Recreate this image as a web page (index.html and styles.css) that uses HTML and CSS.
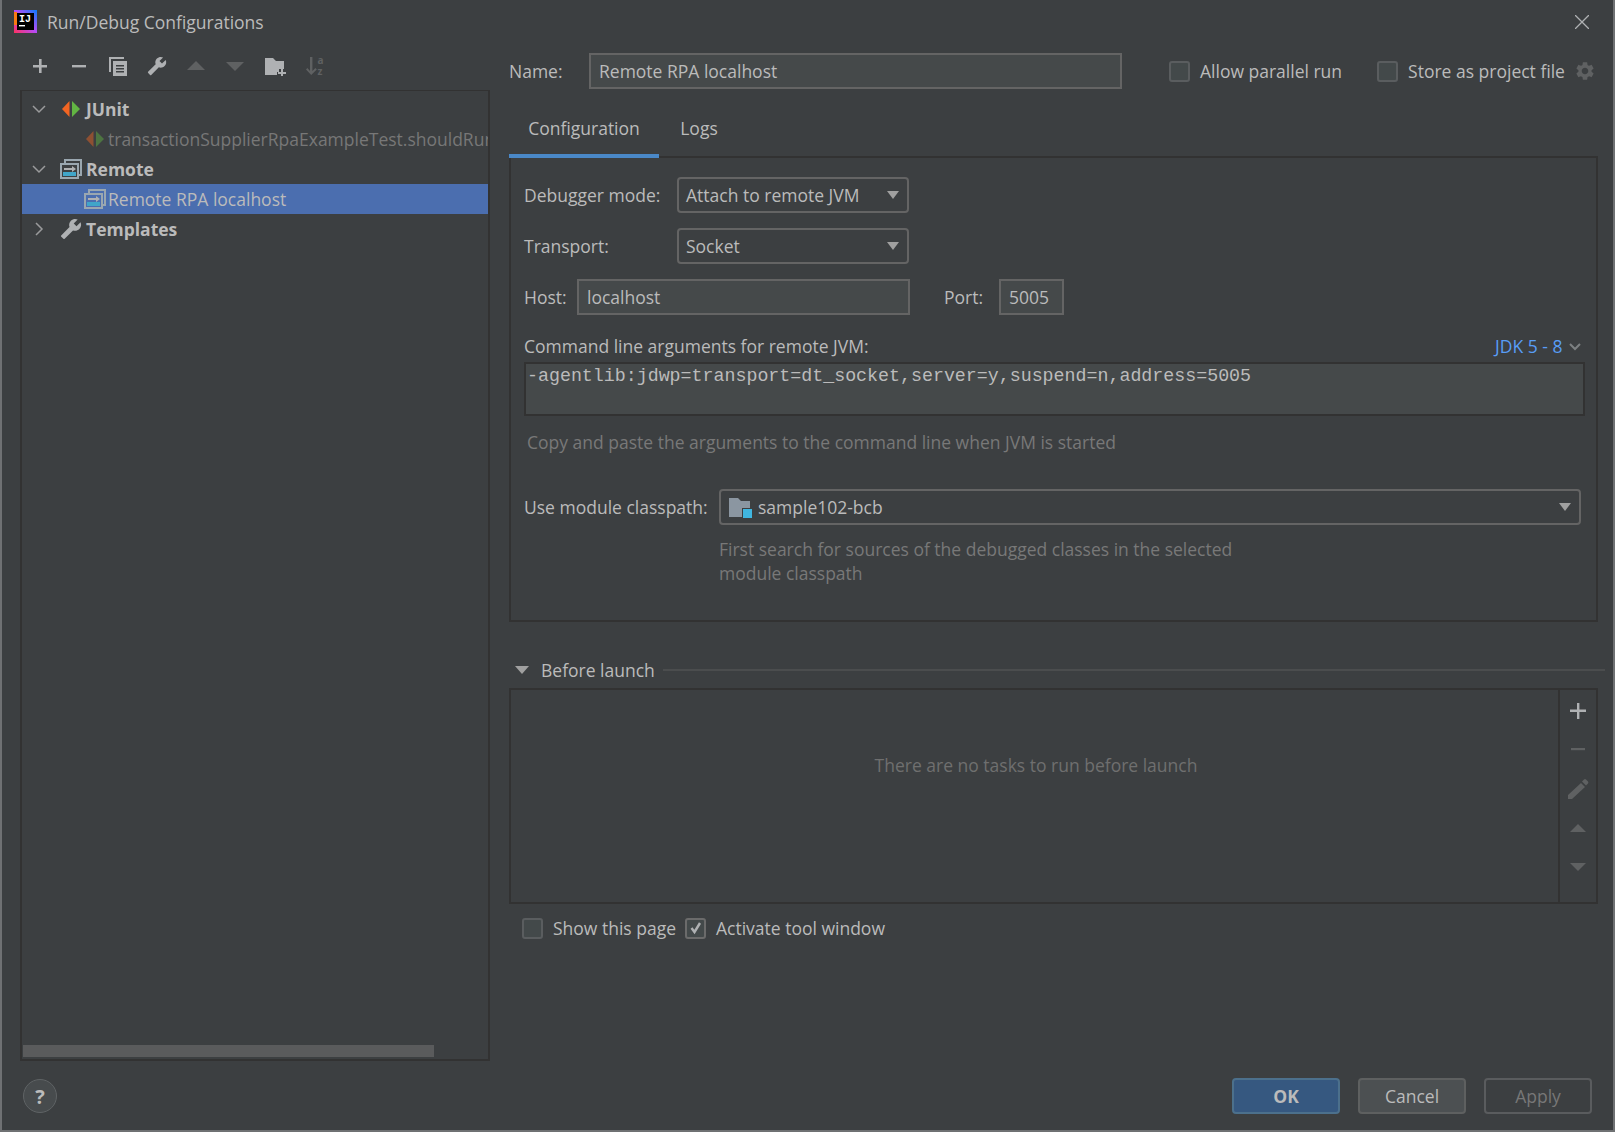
FILE: index.html
```html
<!DOCTYPE html>
<html lang="en">

<head>
    <meta charset="UTF-8">
    <title>Run/Debug Configurations</title>
    <link rel="stylesheet" href="styles.css">
</head>

<body>
    <svg class="defs" width="0" height="0">
        <symbol id="i-junit" viewBox="0 0 20 16">
            <path fill="#f26522" d="M8.5 0v16L1 8z" />
            <path fill="#62b543" d="M11 0v16l8-8z" />
        </symbol>
        <symbol id="i-remote" viewBox="0 0 22 20">
            <path fill="none" stroke="#9aa7b0" stroke-width="2" d="M5 4V1h16v15h-3" />
            <path fill="none" stroke="#9aa7b0" stroke-width="2" d="M1 5h17v14H1z" />
            <path fill="#40a5c9" d="M3 13h13v4H3z" />
            <path fill="#afb1b3" d="M4 9h8V7l4 3-4 3v-2H4z" />
        </symbol>
        <symbol id="i-wrench" viewBox="0 0 24 24">
            <path fill="#afb1b3" transform="matrix(-1 0 0 1 24 0)" d="M22.7 19l-9.1-9.1c.9-2.3.4-5-1.5-6.9-2-2-5-2.4-7.4-1.3L9 6 6 9 1.6 4.7C.4 7.1.9 10.1 2.9 12.1c1.9 1.9 4.6 2.4 6.9 1.5l9.1 9.1c.4.4 1 .4 1.4 0l2.3-2.3c.5-.4.5-1.1.1-1.4z" />
        </symbol>
    </svg>

    <div class="window">
        <div class="titlebar">
            <svg class="logo" width="23" height="23" viewBox="0 0 23 23">
                <defs>
                    <linearGradient id="logo-grad" x1="0" y1="1" x2="1" y2="0">
                        <stop offset="0" stop-color="#fe315d" />
                        <stop offset="0.5" stop-color="#b74af7" />
                        <stop offset="1" stop-color="#087cfa" />
                    </linearGradient>
                </defs>
                <rect width="23" height="23" fill="url(#logo-grad)" />
                <path fill="#f97a12" d="M0 2h3v13H0z" />
                <rect x="3" y="3" width="17" height="17" fill="#000" />
                <text x="5" y="12" class="logo-text">IJ</text>
                <rect x="5" y="15" width="6" height="1.4" fill="#fff" />
            </svg>
            <span class="title">Run/Debug Configurations</span>
            <svg class="close" width="14" height="14" viewBox="0 0 14 14">
                <path fill="none" stroke="#afb1b3" stroke-width="1.3" d="M0 0l14 14M14 0L0 14" />
            </svg>
        </div>

        <div class="main">
            <div class="sidebar">
                <div class="toolbar">
                    <svg class="tool" width="20" height="20" viewBox="0 0 20 20"><path fill="#afb1b3" d="M9 3h2.600v6H17v2.600h-5.400V17H9v-5.400H3V9h6z" /></svg>
                    <svg class="tool" width="20" height="20" viewBox="0 0 20 20"><path fill="#afb1b3" d="M3 9h14v2.400H3z" /></svg>
                    <svg class="tool" width="20" height="20" viewBox="0 0 20 20"><path fill="#afb1b3" d="M1 1h15v2H3v13H1zM5 5h14v15H5zM8 9v1.500h8V9zm0 3v1.500h8V12zm0 3v1.500h8V15z" fill-rule="evenodd" /></svg>
                    <svg class="tool" width="20" height="20"><use href="#i-wrench" /></svg>
                    <svg class="tool" width="20" height="20" viewBox="0 0 20 20"><path fill="#5f6162" d="M10 5l9 9H1z" /></svg>
                    <svg class="tool" width="20" height="20" viewBox="0 0 20 20"><path fill="#5f6162" d="M1 6h18l-9 9z" /></svg>
                    <svg class="tool" width="22" height="20" viewBox="0 0 22 20"><path fill="#afb1b3" d="M1 2h8l3 3h8v8h-5v3h-2v3H1z" /><path fill="#afb1b3" d="M17 13h2v3h3v2h-3v3h-2v-3h-3v-2h3z" /></svg>
                    <svg class="tool" width="20" height="22" viewBox="0 0 20 22">
                        <path fill="#5f6162" d="M5 2h2.400v14l3-3 1.400 1.500L6.200 20 1 14.500 2.400 13l2.600 3z" />
                        <text x="12.500" y="9" class="sort-letter">a</text>
                        <text x="12.500" y="20" class="sort-letter">z</text>
                    </svg>
                </div>
                <div class="tree">
                    <div class="tree-row">
                        <svg class="chev" width="14" height="14" viewBox="0 0 14 14"><path fill="none" stroke="#9a9b9c" stroke-width="1.500" d="M1 4l6 6 6-6" /></svg>
                        <svg class="tree-icon" width="20" height="16"><use href="#i-junit" /></svg>
                        <span class="group">JUnit</span>
                    </div>
                    <div class="tree-row child dim">
                        <svg class="tree-icon dim-icon" width="20" height="16"><use href="#i-junit" /></svg>
                        <span>transactionSupplierRpaExampleTest.shouldRunBatchProcess</span>
                    </div>
                    <div class="tree-row">
                        <svg class="chev" width="14" height="14" viewBox="0 0 14 14"><path fill="none" stroke="#9a9b9c" stroke-width="1.500" d="M1 4l6 6 6-6" /></svg>
                        <svg class="tree-icon" width="22" height="20"><use href="#i-remote" /></svg>
                        <span class="group">Remote</span>
                    </div>
                    <div class="tree-row child selected">
                        <svg class="tree-icon" width="22" height="20"><use href="#i-remote" /></svg>
                        <span>Remote RPA localhost</span>
                    </div>
                    <div class="tree-row">
                        <svg class="chev" width="14" height="14" viewBox="0 0 14 14"><path fill="none" stroke="#9a9b9c" stroke-width="1.500" d="M4 1l6 6-6 6" /></svg>
                        <svg class="tree-icon" width="22" height="22"><use href="#i-wrench" /></svg>
                        <span class="group">Templates</span>
                    </div>
                    <div class="scrollbar">
                        <div class="thumb"></div>
                    </div>
                </div>
            </div>

            <div class="content">
                <div class="name-row">
                    <span class="name-label">Name:</span>
                    <div class="input name-input">Remote RPA localhost</div>
                    <label class="check parallel"><span class="box"></span>Allow parallel run</label>
                    <label class="check store"><span class="box"></span>Store as project file</label>
                    <svg class="gear" width="22" height="22" viewBox="0 0 24 24">
                        <path fill="#5f6162" d="M19.140 12.940c.04-.3.06-.61.06-.94 0-.32-.02-.64-.07-.94l2.030-1.580c.18-.14.23-.41.12-.61l-1.920-3.320c-.12-.22-.37-.29-.59-.22l-2.390.96c-.5-.38-1.030-.7-1.620-.94l-.36-2.540c-.04-.24-.24-.41-.48-.41h-3.840c-.24 0-.43.17-.47.41l-.36 2.540c-.59.24-1.130.57-1.620.94l-2.390-.96c-.22-.08-.47 0-.59.22L2.740 8.870c-.12.21-.08.47.12.61l2.030 1.580c-.05.3-.09.63-.09.94s.02.64.07.94l-2.030 1.580c-.18.14-.23.41-.12.61l1.920 3.320c.12.22.37.29.59.22l2.390-.96c.5.38 1.030.7 1.620.94l.36 2.540c.05.24.24.41.48.41h3.840c.24 0 .44-.17.47-.41l.36-2.540c.59-.24 1.130-.56 1.620-.94l2.390.96c.22.08.47 0 .59-.22l1.920-3.320c.12-.22.07-.47-.12-.61l-2.010-1.580zM12 15.600c-1.980 0-3.600-1.620-3.600-3.600s1.620-3.600 3.600-3.600 3.600 1.620 3.600 3.600-1.620 3.600-3.600 3.600z" />
                    </svg>
                </div>

                <div class="tabs">
                    <div class="tab active">Configuration</div>
                    <div class="tab">Logs</div>
                </div>

                <div class="panel">
                    <div class="form-row">
                        <span class="field-label">Debugger mode:</span>
                        <div class="combo short">Attach to remote JVM<span class="arrow"></span></div>
                    </div>
                    <div class="form-row">
                        <span class="field-label">Transport:</span>
                        <div class="combo short">Socket<span class="arrow"></span></div>
                    </div>
                    <div class="form-row">
                        <span class="host-label">Host:</span>
                        <div class="input host-input">localhost</div>
                        <span class="port-label">Port:</span>
                        <div class="input port-input">5005</div>
                    </div>
                    <div class="args-head">
                        <span>Command line arguments for remote JVM:</span>
                        <span class="jdk">JDK 5 - 8
                            <svg width="12" height="8" viewBox="0 0 12 8"><path fill="none" stroke="#7d8082" stroke-width="2" d="M1 1l5 5 5-5" /></svg>
                        </span>
                    </div>
                    <div class="args">-agentlib:jdwp=transport=dt_socket,server=y,suspend=n,address=5005</div>
                    <div class="hint copy-hint">Copy and paste the arguments to the command line when JVM is started</div>
                    <div class="form-row module-row">
                        <span class="module-label">Use module classpath:</span>
                        <div class="combo wide">
                            <svg class="folder" width="23" height="21" viewBox="0 0 23 21">
                                <path fill="#8b96a1" d="M0 1h9l3 3h9v16H0z" />
                                <path fill="#3d3f41" d="M13 11h10v10H13z" />
                                <path fill="#40b6e0" d="M14 12h9v9h-9z" />
                            </svg>
                            sample102-bcb<span class="arrow"></span>
                        </div>
                    </div>
                    <div class="hint module-hint">First search for sources of the debugged classes in the selected<br>module classpath</div>
                </div>

                <div class="before-head">
                    <span class="fold"></span>
                    <span class="before-title">Before launch</span>
                    <span class="before-line"></span>
                </div>

                <div class="tasks">
                    <div class="tasks-empty">There are no tasks to run before launch</div>
                    <div class="tasks-tools">
                        <svg width="18" height="18" viewBox="0 0 18 18"><path fill="#afb1b3" d="M8 1h2.400v6.600H17V10h-6.600v7H8v-7H1V7.600h7z" /></svg>
                        <svg width="18" height="18" viewBox="0 0 18 18"><path fill="#5f6162" d="M2 8h14v2.200H2z" /></svg>
                        <svg width="22" height="22" viewBox="0 0 22 22"><path fill="#5f6162" d="M1 17L14 5l4 4L5 21H1zM15 3.500l2-2q1-.8 2 0l2 2q.8 1 0 2l-2 2z" /></svg>
                        <svg width="18" height="18" viewBox="0 0 18 18"><path fill="#5f6162" d="M9 4l8 8H1z" /></svg>
                        <svg width="18" height="18" viewBox="0 0 18 18"><path fill="#5f6162" d="M1 5h16l-8 8z" /></svg>
                    </div>
                </div>

                <div class="task-checks">
                    <label class="check"><span class="box"></span>Show this page</label>
                    <label class="check"><span class="box checked">
                        <svg width="14" height="14" viewBox="0 0 14 14"><path fill="none" stroke="#afb1b3" stroke-width="2.400" d="M2.500 7l3 4 5.500-9" /></svg>
                    </span>Activate tool window</label>
                </div>
            </div>
        </div>

        <div class="footer">
            <div class="help">?</div>
            <div class="buttons">
                <button class="btn ok">OK</button>
                <button class="btn">Cancel</button>
                <button class="btn off">Apply</button>
            </div>
        </div>
    </div>
</body>

</html>
```
FILE: styles.css
```css
* {
    margin: 0;
    padding: 0;
    box-sizing: border-box;
}

body {
    width: 1615px;
    height: 1132px;
    overflow: hidden;
    background: #3c3f41;
    color: #bbb;
    font: 17.5px "Open Sans", "Noto Sans", sans-serif;
}

.defs {
    display: block;
    height: 0;
}

.window {
    width: 1615px;
    height: 1132px;
    border-left: 2px solid #6f7173;
    border-right: 2px solid #6f7173;
    border-bottom: 2px solid #6f7173;
    display: flex;
    flex-direction: column;
}

.titlebar {
    height: 48px;
    display: flex;
    align-items: center;
    padding: 0 24px 5px 12px;
}

.logo-text {
    font: bold 10px "Liberation Mono", monospace;
    fill: #fff;
}

.title {
    margin-left: 10px;
}

.close {
    margin-left: auto;
}

.main {
    height: 1013px;
    display: flex;
}

.sidebar {
    width: 488px;
    padding-left: 18px;
    display: flex;
    flex-direction: column;
}

.toolbar {
    height: 42px;
    display: flex;
    align-items: center;
    padding: 0 0 6px 10px;
    gap: 19px;
}

.tree {
    height: 971px;
    width: 470px;
    border: 2px solid #323232;
    border-top-width: 1px;
    padding-top: 3px;
    display: flex;
    flex-direction: column;
    overflow: hidden;
    font-size: 17.5px;
}

.tree-row {
    height: 30px;
    flex: none;
    display: flex;
    align-items: center;
    padding-left: 10px;
    white-space: nowrap;
}

.tree-row .tree-icon {
    flex: none;
    margin-left: 14px;
    margin-right: 3px;
    width: 22px;
}

.tree-row.child {
    padding-left: 40px;
}

.tree-row.child .tree-icon {
    margin-left: 22px;
    margin-right: 2px;
}

.chev {
    flex: none;
}

.group {
    font-weight: 700;
    margin-left: 1px;
}

.dim {
    color: #777;
}

.dim-icon {
    opacity: 0.45;
}

.selected {
    background: #4b6eaf;
}

.scrollbar {
    margin-top: auto;
    height: 14px;
    padding: 0 0 0 1px;
    flex: none;
}

.thumb {
    width: 411px;
    height: 12px;
    background: #5a5b5c;
}

.content {
    width: 1121px;
    padding-left: 19px;
}

.name-row {
    height: 46px;
    display: flex;
    align-items: center;
    padding-top: 0;
}

.name-label {
    width: 80px;
}

.input {
    height: 36px;
    background: #45494a;
    border: 2px solid #646464;
    padding-left: 8px;
    display: flex;
    align-items: center;
}

.name-input {
    width: 533px;
}

.check {
    display: flex;
    align-items: center;
}

.box {
    width: 21px;
    height: 21px;
    border: 2px solid #5a5d5f;
    border-radius: 3px;
    background: #43494a;
    margin-right: 10px;
    display: flex;
    align-items: center;
    justify-content: center;
    flex: none;
}

.box.checked {
    background: #43494a;
    border-color: #6b6b6b;
}

.parallel {
    margin-left: 47px;
}

.store {
    margin-left: 35px;
}

.gear {
    margin-left: 9px;
}

.tabs {
    height: 64px;
    display: flex;
    padding-left: 0;
    border-bottom: 2px solid #323232;
    width: 1089px;
    margin-left: 0;
}

.tab {
    width: 150px;
    height: 64px;
    padding-top: 19px;
    text-align: center;
    line-height: 30px;
}

.tab + .tab {
    width: 80px;
    text-align: center;
}

.tab.active {
    border-bottom: 4px solid #4a88c7;
}

.panel {
    width: 1089px;
    height: 464px;
    border: 2px solid #323232;
    border-top: none;
    padding: 19px 13px 0 13px;
}

.form-row {
    height: 36px;
    display: flex;
    align-items: center;
    margin-bottom: 15px;
}

.field-label {
    width: 153px;
}

.combo {
    position: relative;
    height: 36px;
    display: flex;
    align-items: center;
    border: 2px solid #646464;
    border-radius: 4px;
    padding-left: 7px;
}

.combo.short {
    width: 232px;
}

.combo.wide {
    width: 862px;
}

.arrow {
    position: absolute;
    right: 8px;
    top: 12px;
    width: 0;
    height: 0;
    border-left: 6.500px solid transparent;
    border-right: 6.500px solid transparent;
    border-top: 8px solid #a0a0a0;
}

.host-label {
    width: 53px;
}

.host-input {
    width: 333px;
}

.port-label {
    margin-left: 34px;
    width: 55px;
}

.port-input {
    width: 65px;
}

.args-head {
    display: flex;
    justify-content: space-between;
    height: 32px;
    padding-right: 2px;
    margin-top: 3px;
    line-height: 32px;
}

.jdk {
    color: #589df6;
}

.jdk svg {
    margin-left: 2px;
    margin-bottom: 2px;
}

.args {
    height: 54px;
    width: 1061px;
    background: #45494a;
    border: 2px solid #323232;
    border-top-width: 2px;
    padding: 2px 0 0 1px;
    font: 18.300px "Liberation Mono", monospace;
    color: #a9b7c6;
    color: #bbb;
    white-space: nowrap;
}

.hint {
    color: #787878;
}

.copy-hint {
    padding-left: 3px;
    height: 73px;
    padding-top: 14px;
}

.module-label {
    width: 195px;
}

.folder {
    margin: 0 6px 0 1px;
}

.module-row {
    margin-bottom: 0;
}

.module-hint {
    padding: 12px 0 0 195px;
    line-height: 24px;
}

.before-head {
    height: 66px;
    padding-top: 30px;
    display: flex;
    align-items: center;
}

.fold {
    margin-left: 6px;
    width: 0;
    height: 0;
    border-left: 7px solid transparent;
    border-right: 7px solid transparent;
    border-top: 8px solid #a0a0a0;
}

.before-title {
    margin-left: 12px;
}

.before-line {
    margin-left: 8px;
    height: 2px;
    background: #4b4d4e;
    width: 942px;
}

.tasks {
    width: 1089px;
    height: 216px;
    border: 2px solid #323232;
    display: flex;
}

.tasks-empty {
    flex: 1;
    color: #6f6f6f;
    display: flex;
    align-items: center;
    justify-content: center;
    padding-bottom: 62px;
    padding-left: 3px;
    border-right: 2px solid #323232;
}

.tasks-tools {
    width: 36px;
    padding-top: 12px;
    display: flex;
    flex-direction: column;
    align-items: center;
    gap: 20px;
}

.task-checks {
    height: 48px;
    display: flex;
    align-items: center;
    padding-left: 13px;
    gap: 9px;
}

.footer {
    flex: 1;
    display: flex;
    align-items: center;
    justify-content: space-between;
    padding: 0 21px 0 22px;
}

.help {
    width: 34px;
    height: 34px;
    border-radius: 50%;
    background: #474b4d;
    border: 1px solid #5f6365;
    display: flex;
    align-items: center;
    justify-content: center;
    font-weight: 700;
    font-size: 20px;
    margin-left: -1px;
    margin-top: 1px;
}

.buttons {
    display: flex;
    gap: 18px;
}

.btn {
    width: 108px;
    height: 36px;
    border: 2px solid #5e6060;
    border-radius: 4px;
    background: #4c5052;
    color: #bbb;
    font: inherit;
}

.btn.ok {
    background: #365880;
    border-color: #4c708c;
    font-weight: 700;
}

.btn.off {
    background: transparent;
    color: #777;
    border-color: #5a5c5e;
}

.sort-letter {
    font: bold 10px "Open Sans", sans-serif;
    fill: #5f6162;
}
```
